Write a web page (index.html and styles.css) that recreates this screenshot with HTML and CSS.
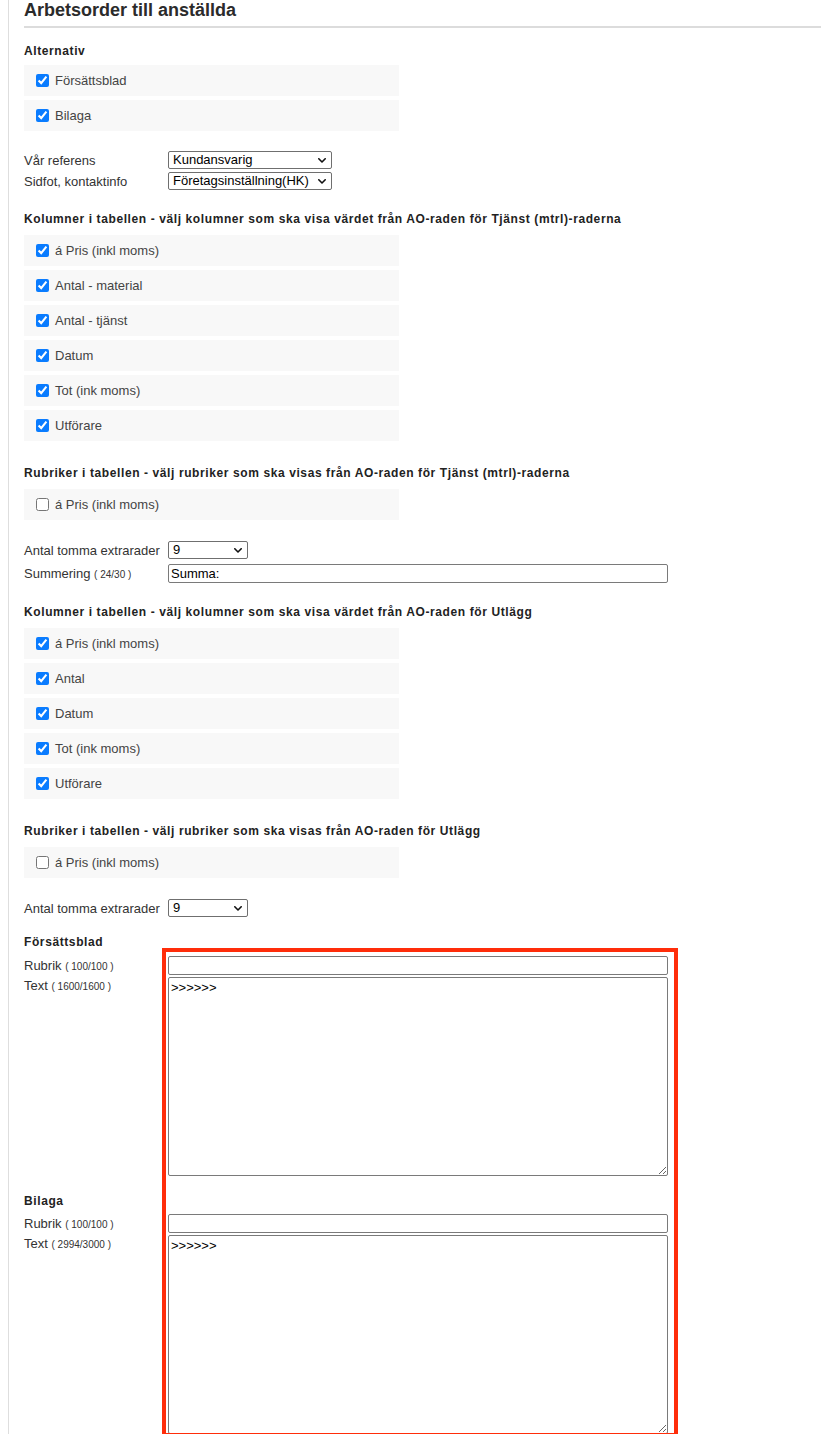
FILE: index.html
```html
<!DOCTYPE html>
<html lang="sv">
<head>
<meta charset="utf-8">
<title>Arbetsorder till anställda</title>
<link rel="stylesheet" href="styles.css">
</head>
<body>
<div class="page">
  <h1 class="title">Arbetsorder till anställda</h1>

  <h2 class="sec sec-first">Alternativ</h2>
  <div class="checks">
    <label class="check"><input type="checkbox" checked><span>Försättsblad</span></label>
    <label class="check"><input type="checkbox" checked><span>Bilaga</span></label>
  </div>

  <div class="form form-a">
    <span class="lbl">Vår referens</span>
    <span class="selwrap w-wide"><select class="sel"><option>Kundansvarig</option></select><svg class="chev" width="8" height="5" viewBox="0 0 8 5"><path d="M0.8 0.8 L4 4 L7.2 0.8" fill="none" stroke="#111" stroke-width="1.6" stroke-linecap="round" stroke-linejoin="round"/></svg></span>
    <span class="lbl">Sidfot, kontaktinfo</span>
    <span class="selwrap w-wide"><select class="sel"><option>Företagsinställning(HK)</option></select><svg class="chev" width="8" height="5" viewBox="0 0 8 5"><path d="M0.8 0.8 L4 4 L7.2 0.8" fill="none" stroke="#111" stroke-width="1.6" stroke-linecap="round" stroke-linejoin="round"/></svg></span>
  </div>

  <h2 class="sec sec-after-form">Kolumner i tabellen - välj kolumner som ska visa värdet från AO-raden för Tjänst (mtrl)-raderna</h2>
  <div class="checks">
    <label class="check"><input type="checkbox" checked><span>á Pris (inkl moms)</span></label>
    <label class="check"><input type="checkbox" checked><span>Antal - material</span></label>
    <label class="check"><input type="checkbox" checked><span>Antal - tjänst</span></label>
    <label class="check"><input type="checkbox" checked><span>Datum</span></label>
    <label class="check"><input type="checkbox" checked><span>Tot (ink moms)</span></label>
    <label class="check"><input type="checkbox" checked><span>Utförare</span></label>
  </div>

  <h2 class="sec sec-after-checks">Rubriker i tabellen - välj rubriker som ska visas från AO-raden för Tjänst (mtrl)-raderna</h2>
  <div class="checks">
    <label class="check"><input type="checkbox"><span>á Pris (inkl moms)</span></label>
  </div>

  <div class="form form-b">
    <span class="lbl">Antal tomma extrarader</span>
    <span class="selwrap w-narrow"><select class="sel"><option>9</option></select><svg class="chev" width="8" height="5" viewBox="0 0 8 5"><path d="M0.8 0.8 L4 4 L7.2 0.8" fill="none" stroke="#111" stroke-width="1.6" stroke-linecap="round" stroke-linejoin="round"/></svg></span>
    <span class="lbl">Summering <small class="cnt">( 24/30 )</small></span>
    <input class="txt" type="text" value="Summa:">
  </div>

  <h2 class="sec sec-after-form">Kolumner i tabellen - välj kolumner som ska visa värdet från AO-raden för Utlägg</h2>
  <div class="checks">
    <label class="check"><input type="checkbox" checked><span>á Pris (inkl moms)</span></label>
    <label class="check"><input type="checkbox" checked><span>Antal</span></label>
    <label class="check"><input type="checkbox" checked><span>Datum</span></label>
    <label class="check"><input type="checkbox" checked><span>Tot (ink moms)</span></label>
    <label class="check"><input type="checkbox" checked><span>Utförare</span></label>
  </div>

  <h2 class="sec sec-after-checks">Rubriker i tabellen - välj rubriker som ska visas från AO-raden för Utlägg</h2>
  <div class="checks">
    <label class="check"><input type="checkbox"><span>á Pris (inkl moms)</span></label>
  </div>

  <div class="form form-c">
    <span class="lbl">Antal tomma extrarader</span>
    <span class="selwrap w-narrow"><select class="sel"><option>9</option></select><svg class="chev" width="8" height="5" viewBox="0 0 8 5"><path d="M0.8 0.8 L4 4 L7.2 0.8" fill="none" stroke="#111" stroke-width="1.6" stroke-linecap="round" stroke-linejoin="round"/></svg></span>
  </div>

  <h2 class="sec sec-block">Försättsblad</h2>
  <div class="form form-d">
    <span class="lbl">Rubrik <small class="cnt">( 100/100 )</small></span>
    <input class="txt" type="text" value="">
    <span class="lbl lbl-top">Text <small class="cnt">( 1600/1600 )</small></span>
    <textarea class="area">&gt;&gt;&gt;&gt;&gt;&gt;</textarea>
  </div>

  <h2 class="sec sec-block2">Bilaga</h2>
  <div class="form form-d">
    <span class="lbl">Rubrik <small class="cnt">( 100/100 )</small></span>
    <input class="txt" type="text" value="">
    <span class="lbl lbl-top">Text <small class="cnt">( 2994/3000 )</small></span>
    <textarea class="area">&gt;&gt;&gt;&gt;&gt;&gt;</textarea>
  </div>

  <div class="highlight"></div>
</div>
</body>
</html>
```

FILE: styles.css
```css
html {
  overflow: hidden;
}
body {
  margin: 0;
  background: #fff;
  font-family: "Liberation Sans", Arial, Helvetica, sans-serif;
  color: #333;
}
.page {
  position: relative;
  margin-left: 8px;
  border-left: 1px solid #dedede;
  padding-left: 15px;
  min-height: 1434px;
  box-sizing: border-box;
}
.title {
  margin: 0;
  font-size: 18px;
  line-height: 21px;
  font-weight: bold;
  color: #2b2b2b;
  padding-bottom: 5px;
  border-bottom: 2px solid #dcdcdc;
}
.sec {
  margin: 0;
  font-size: 12px;
  line-height: 15px;
  font-weight: bold;
  letter-spacing: 0.6px;
  color: #222;
}
.sec-first { margin-top: 16px; margin-bottom: 6px; }
.sec-after-form { margin-top: 22px; margin-bottom: 8px; }
.sec-after-checks { margin-top: 21px; margin-bottom: 8px; }
.sec-block { margin-top: 18px; margin-bottom: 6px; }
.sec-block2 { margin-top: 18px; margin-bottom: 5px; }

.checks {
  display: flex;
  flex-direction: column;
  gap: 4px;
  width: 375px;
  padding-bottom: 4px;
}
.check {
  display: flex;
  align-items: center;
  height: 31px;
  background: #f8f8f8;
  padding-left: 12px;
  font-size: 13px;
  color: #444;
}
.check input {
  margin: 0 6px 0 0;
  width: 13px;
  height: 13px;
  accent-color: #0a7cff;
}

.form {
  display: grid;
  grid-template-columns: 144px auto;
  align-items: center;
  justify-items: start;
  font-size: 13px;
}
.form-a { margin-top: 16px; row-gap: 3px; }
.form-b { margin-top: 17px; row-gap: 5px; }
.form-c { margin-top: 17px; }
.form-d { row-gap: 2px; }

.lbl {
  font-size: 13px;
  line-height: 16px;
  padding-top: 1px;
  color: #333;
}
.lbl-top { align-self: start; }
.cnt {
  font-size: 10px;
}

.selwrap {
  position: relative;
  display: inline-block;
  height: 18px;
}
.w-wide { width: 164px; }
.w-narrow { width: 80px; }
.sel {
  appearance: none;
  -webkit-appearance: none;
  width: 100%;
  height: 18px;
  margin: 0;
  padding: 0 16px 0 4px;
  border: 1px solid #6f6f6f;
  border-radius: 2px;
  background: #fff;
  font-family: "Liberation Sans", Arial, sans-serif;
  font-size: 13px;
  line-height: 16px;
  color: #000;
  box-sizing: border-box;
  display: block;
}
.chev {
  position: absolute;
  right: 6px;
  top: 7px;
  pointer-events: none;
}
.txt {
  width: 500px;
  height: 19px;
  margin: 0;
  padding: 0 2px;
  border: 1px solid #7a7a7a;
  border-radius: 2px;
  font-family: "Liberation Sans", Arial, sans-serif;
  font-size: 13px;
  color: #000;
  box-sizing: border-box;
}
.area {
  width: 500px;
  height: 199px;
  margin: 0;
  padding: 2px;
  border: 1px solid #7a7a7a;
  border-radius: 2px;
  font-family: "Liberation Sans", Arial, sans-serif;
  font-size: 13px;
  line-height: 15px;
  color: #000;
  box-sizing: border-box;
  resize: both;
  display: block;
}
.highlight {
  position: absolute;
  left: 153px;
  top: 948px;
  width: 516px;
  height: 489px;
  border: 4px solid #ff2d0a;
  box-sizing: border-box;
  pointer-events: none;
}
```
